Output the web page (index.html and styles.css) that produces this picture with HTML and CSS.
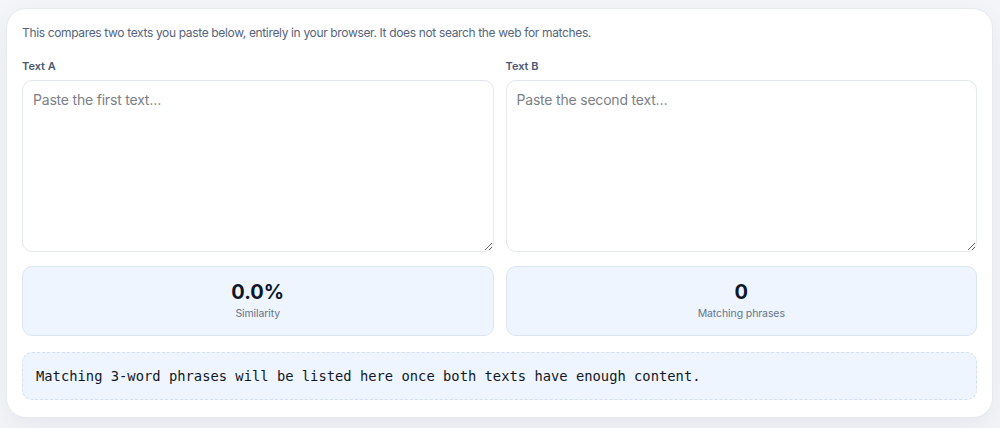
FILE: index.html
```html
<!DOCTYPE html>
<html lang="en">
<head>
    <meta charset="UTF-8">
    <meta name="viewport" content="width=device-width, initial-scale=1.0">
    <title>Text Comparison</title>
    <link rel="stylesheet" href="styles.css">
</head>
<body>
    <div class="card">
        <p class="intro">This compares two texts you paste below, entirely in your browser. It does not search the web for matches.</p>

        <div class="columns">
            <div class="field">
                <label for="textA">Text A</label>
                <textarea id="textA" placeholder="Paste the first text…"></textarea>
            </div>
            <div class="field">
                <label for="textB">Text B</label>
                <textarea id="textB" placeholder="Paste the second text…"></textarea>
            </div>
        </div>

        <div class="columns stats">
            <div class="stat-box">
                <div class="stat-value">0.0%</div>
                <div class="stat-label">Similarity</div>
            </div>
            <div class="stat-box">
                <div class="stat-value">0</div>
                <div class="stat-label">Matching phrases</div>
            </div>
        </div>

        <div class="result-box">Matching 3-word phrases will be listed here once both texts have enough content.</div>
    </div>
</body>
</html>
```

FILE: styles.css
```css
body {
    margin: 0;
    padding: 8px 7px 12px 6px;
    background: #f3f5f9;
    font-family: Inter, "Noto Sans", sans-serif;
}
.card {
    background: #fff;
    border: 1px solid #e6e9ef;
    border-radius: 20px;
    padding: 14px 15px 17px 15px;
    box-shadow: 0 10px 30px rgba(15, 23, 42, 0.06);
}
.intro {
    margin: 0 0 15px 0;
    font-size: 12px;
    letter-spacing: -0.35px;
    line-height: 20px;
    color: #55647d;
}
.columns {
    display: grid;
    grid-template-columns: 1fr 1fr;
    gap: 12px;
}
.field label {
    display: block;
    font-size: 11px;
    font-weight: 600;
    line-height: 16px;
    color: #4a5872;
    margin-bottom: 6px;
}
textarea {
    display: block;
    box-sizing: border-box;
    width: 100%;
    height: 172px;
    padding: 10px;
    border: 1px solid #e3e7ee;
    border-radius: 10px;
    font-family: Inter, "Noto Sans", sans-serif;
    font-size: 14px;
    letter-spacing: -0.2px;
    line-height: 18px;
    color: #1e293b;
    resize: vertical;
}
textarea::placeholder { color: #7b7f87; }

/* Stats */
.stats { margin-top: 14px; }
.stat-box {
    background: #eef5ff;
    border: 1px solid #dbe5f2;
    border-radius: 10px;
    padding: 13px;
    text-align: center;
}
.stat-value {
    font-size: 20px;
    font-weight: 700;
    line-height: 24px;
    color: #0f172a;
    margin-bottom: 2px;
}
.stat-label {
    font-size: 10.5px;
    letter-spacing: -0.1px;
    line-height: 16px;
    color: #66748b;
}

/* Phrase list */
.result-box {
    margin-top: 16px;
    background: #eef5ff;
    border: 1px dashed #d3deee;
    border-radius: 10px;
    padding: 13px;
    font-family: "DejaVu Sans Mono", monospace;
    font-size: 13.8px;
    line-height: 20px;
    color: #111827;
}
```
